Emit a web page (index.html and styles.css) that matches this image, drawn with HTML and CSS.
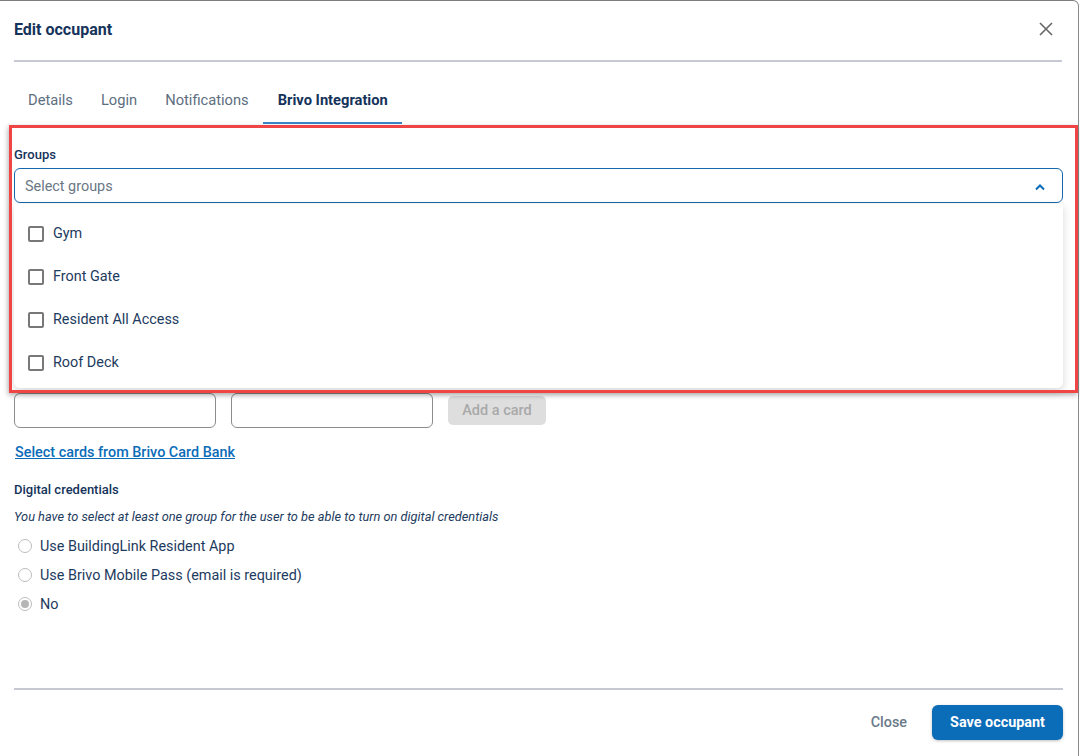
FILE: index.html
```html
<!DOCTYPE html>
<html lang="en">
<head>
    <meta charset="UTF-8">
    <meta name="viewport" content="width=device-width, initial-scale=1.0">
    <title>Edit occupant</title>
    <link rel="stylesheet" href="styles.css">
</head>
<body>
    <div class="modal">
        <div class="modal-header">
            <h3 class="modal-title">Edit occupant</h3>
            <button class="close-btn" aria-label="Close">
                <svg width="14" height="14" viewBox="0 0 14 14"><path d="M1 1L13 13M13 1L1 13" stroke="#666" stroke-width="1.6" fill="none"/></svg>
            </button>
        </div>

        <div class="tabs-header">
            <button class="tab-btn">Details</button>
            <button class="tab-btn">Login</button>
            <button class="tab-btn">Notifications</button>
            <button class="tab-btn active">Brivo Integration</button>
        </div>

        <div class="modal-body">
            <div class="field">
                <label class="field-label">Groups</label>
                <div class="select open">
                    <span class="select-placeholder">Select groups</span>
                    <svg class="select-arrow" width="12" height="8" viewBox="0 0 12 8"><path d="M2 6.5L6 2.5L10 6.5" stroke="#0b6cb8" stroke-width="2" fill="none"/></svg>
                    <ul class="select-menu">
                        <li class="select-option"><span class="checkbox"></span>Gym</li>
                        <li class="select-option"><span class="checkbox"></span>Front Gate</li>
                        <li class="select-option"><span class="checkbox"></span>Resident All Access</li>
                        <li class="select-option"><span class="checkbox"></span>Roof Deck</li>
                    </ul>
                </div>
            </div>

            <div class="cards-row">
                <input class="text-input" type="text">
                <input class="text-input" type="text">
                <button class="add-card-btn" disabled>Add a card</button>
            </div>

            <a class="card-bank-link" href="#">Select cards from Brivo Card Bank</a>

            <div class="section-title">Digital credentials</div>
            <p class="hint">You have to select at least one group for the user to be able to turn on digital credentials</p>

            <div class="radio-list">
                <label class="radio-row"><span class="radio"></span>Use BuildingLink Resident App</label>
                <label class="radio-row"><span class="radio"></span>Use Brivo Mobile Pass (email is required)</label>
                <label class="radio-row"><span class="radio checked"></span>No</label>
            </div>
        </div>

        <div class="modal-footer">
            <button class="footer-btn secondary">Close</button>
            <button class="footer-btn primary">Save occupant</button>
        </div>

        <div class="highlight-box"></div>
    </div>
</body>
</html>
```

FILE: styles.css
```css
* {
    box-sizing: border-box;
    margin: 0;
    padding: 0;
    font-family: Roboto, 'Liberation Sans', sans-serif;
}

body {
    background-color: #ffffff;
    color: #1d3b5e;
}

.modal {
    position: relative;
    width: 1079px;
    height: 756px;
    background-color: white;
    border-top: 1px solid #7d7d7d;
    border-right: 1px solid #8a8a8a;
    border-top-right-radius: 6px;
    display: flex;
    flex-direction: column;
}

.modal-header {
    height: 61px;
    margin: 0 16px 0 14px;
    padding-bottom: 3px;
    border-bottom: 2px solid #c6c9d2;
    display: flex;
    justify-content: space-between;
    align-items: center;
}

.modal-title {
    font-size: 16px;
    font-weight: 700;
    color: #15335a;
}

.close-btn {
    background: none;
    border: none;
    width: 20px;
    height: 20px;
    margin-right: 6px;
    display: flex;
    align-items: center;
    justify-content: center;
    cursor: pointer;
}

.tabs-header {
    display: flex;
    margin: 16px 0 0 14px;
}

.tab-btn {
    padding: 13px 14px 12px;
    line-height: 19px;
    background: none;
    border: none;
    border-bottom: 2px solid transparent;
    font-size: 14.7px;
    color: #5d6e80;
    cursor: pointer;
}

.tab-btn:last-child {
    padding-left: 15px;
}

.tab-btn.active {
    color: #15335a;
    font-weight: 700;
    border-bottom-color: #3a86c8;
}

.modal-body {
    flex: 1;
    padding: 23px 15px 0 14px;
}

.field-label {
    display: block;
    font-size: 13px;
    line-height: 16px;
    font-weight: 500;
    color: #15335a;
    margin-bottom: 5px;
}

.select {
    position: relative;
    height: 35px;
    border: 1px solid #1767ad;
    border-radius: 6px;
    display: flex;
    align-items: center;
    justify-content: space-between;
    padding: 2px 16px 0 10px;
}

.select-placeholder {
    font-size: 14.4px;
    color: #6a7785;
}

.select-menu {
    position: absolute;
    top: 35px;
    left: -1px;
    right: -1px;
    height: 184px;
    list-style: none;
    background-color: white;
    border-radius: 0 0 6px 6px;
    box-shadow: 0 3px 8px rgba(0, 0, 0, 0.16);
    padding: 8px 0 5px;
    z-index: 10;
}

.select-option {
    height: 43px;
    display: flex;
    align-items: center;
    padding-left: 14px;
    font-size: 14.4px;
    color: #1d3b5e;
}

.checkbox {
    width: 16px;
    height: 16px;
    border: 2px solid #787878;
    border-radius: 2px;
    margin-right: 9px;
}

.cards-row {
    display: flex;
    align-items: center;
    gap: 15px;
    margin-top: 190px;
}

.text-input {
    width: 202px;
    height: 35px;
    border: 1px solid #8c8c8c;
    border-radius: 6px;
    background: white;
}

.add-card-btn {
    width: 98px;
    height: 29px;
    border: none;
    border-radius: 5px;
    background-color: #dedede;
    color: #a9a9a9;
    font-size: 14.5px;
    font-weight: 500;
}

.card-bank-link {
    display: inline-block;
    margin: 16px 0 0 1px;
    font-size: 14.4px;
    line-height: 17px;
    font-weight: 500;
    color: #0b6cb8;
}

.section-title {
    margin-top: 21px;
    font-size: 13px;
    line-height: 16px;
    font-weight: 500;
    color: #15335a;
}

.hint {
    margin-top: 11px;
    font-size: 12.8px;
    line-height: 16px;
    font-style: italic;
    color: #1d3b5e;
}

.radio-list {
    margin-top: 11px;
    display: flex;
    flex-direction: column;
    gap: 9px;
}

.radio-row {
    display: flex;
    align-items: center;
    height: 20px;
    font-size: 14.4px;
    color: #1d3b5e;
}

.radio {
    width: 14px;
    height: 14px;
    margin: 0 8px 0 4px;
    border: 1px solid #bdbdbd;
    border-radius: 50%;
    display: flex;
    align-items: center;
    justify-content: center;
}

.radio.checked:after {
    content: '';
    width: 8px;
    height: 8px;
    border-radius: 50%;
    background-color: #b5b5b5;
}

.modal-footer {
    margin: 0 15px 0 14px;
    padding: 15px 0 16px;
    border-top: 2px solid #c6c9d2;
    display: flex;
    justify-content: flex-end;
    gap: 13px;
}

.footer-btn {
    height: 35px;
    padding: 0 12px;
    border: none;
    border-radius: 6px;
    font-size: 14.4px;
    cursor: pointer;
}

.footer-btn.secondary {
    background: none;
    color: #6b7a8a;
    font-weight: 500;
}

.footer-btn.primary {
    width: 131px;
    background-color: #0b6cb8;
    color: white;
    font-weight: 700;
    box-shadow: 0 1px 3px rgba(0, 0, 0, 0.25);
}

/* red outline drawn over the groups picker */
.highlight-box {
    position: absolute;
    left: 9px;
    top: 124px;
    width: 1069px;
    height: 268px;
    border: 3px solid #ef4545;
    box-shadow: -1px 2px 5px rgba(0, 0, 0, 0.3);
    pointer-events: none;
    z-index: 20;
}
```
